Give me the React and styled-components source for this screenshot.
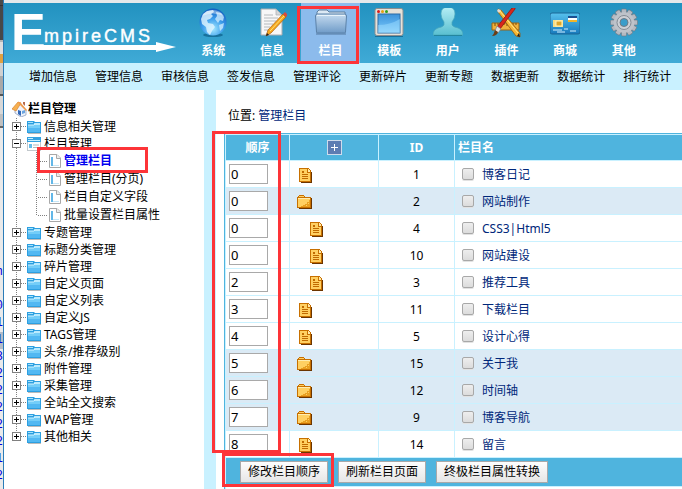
import React, { useState } from 'react';
import styled, { createGlobalStyle, css } from 'styled-components';

const GlobalStyle = createGlobalStyle`
  * {
    box-sizing: border-box;
  }
  body {
    margin: 0;
    background: #fff;
    color: #000;
    font-family: 'Noto Sans', 'Noto Sans CJK SC', sans-serif;
    font-size: 12px;
    line-height: 16px;
  }
  button, input {
    font: inherit;
    color: inherit;
  }
  ul {
    list-style: none;
    margin: 0;
    padding: 0;
  }
  a {
    color: inherit;
    text-decoration: none;
  }
  svg {
    display: block;
    flex: none;
  }
`;

const Page = styled.div`
  display: flex;
  height: 100vh;
  overflow: hidden;
`;

// sliver of the editor window lying behind the browser
const Behind = styled.div`
  flex: none;
  width: 4px;
  overflow: hidden;
  padding-top: 264px;
  border-right: 1px solid #2b7cb8;
  color: #0000e0;
  font-family: 'Liberation Mono', monospace;
  line-height: 17px;
  background: linear-gradient(
    #4a4a4a 0 5px, #333 5px 6px, #484848 6px 40px, #b5b5b5 40px 42px,
    #dedede 42px 54px, #e0a040 54px 63px, #d0d0d0 63px 76px, #a8a8a8 76px 94px,
    #555 94px 96px, #d8d8d8 96px 114px, #c0c0c0 114px 126px, #666 126px 128px,
    #eaeaea 128px
  );
`;

const BehindLine = styled.div`
  display: flex;
  justify-content: flex-end;
  height: 17px;
  background: ${(p) => (p.$current ? '#b4bcc8' : 'transparent')};
`;

const Window = styled.div`
  flex: 1;
  min-width: 0;
  display: flex;
  flex-direction: column;
`;

const Header = styled.header`
  flex: none;
  display: flex;
  align-items: flex-start;
  gap: 8px;
  height: 63px;
  padding-left: 10px;
  border-top: 3px solid #e4e8ea;
  background: linear-gradient(#2292c0, #40aad6);
`;

const LogoBox = styled.div`
  padding-top: 8px;
`;

const TopNav = styled.nav`
  flex: 0 1 469px;
  display: grid;
  grid-template-columns: repeat(8, 1fr);
`;

const TopItem = styled.a`
  position: relative;
  display: flex;
  flex-direction: column;
  align-items: center;
  gap: 5px;
  height: 60px;
  padding-top: 5px;
  color: #fff;
  font-weight: bold;
  background: ${(p) => (p.$active ? '#8cbbec' : 'transparent')};
`;

const Mark = styled.span`
  position: absolute;
  z-index: 2;
  border: 3px solid #fd3438;
  pointer-events: none;
  ${(p) => p.$on === 'nav' && css`
    inset: 3px 1px -1px -4px;
  `}
  ${(p) => p.$on === 'tree' && css`
    inset: -5px auto auto 1px;
    width: 111px;
    height: 26px;
  `}
  ${(p) => p.$on === 'order' && css`
    inset: -2px auto 60px -12px;
    width: 69px;
  `}
  ${(p) => p.$on === 'save' && css`
    inset: auto auto 26px -2px;
    width: 112px;
    height: 34px;
  `}
`;

const SubNav = styled.nav`
  flex: none;
  display: flex;
  align-items: center;
  gap: 18px;
  height: 27px;
  padding-left: 25px;
  overflow: hidden;
  white-space: nowrap;
  background: #c9f1ff;
`;

const Columns = styled.div`
  flex: 1;
  min-height: 0;
  display: flex;
`;

const Sidebar = styled.aside`
  flex: none;
  width: 212px;
  padding: 9px 0 0 8px;
  border-right: 12px solid #c9f1ff;
  white-space: nowrap;
`;

const TreeTitle = styled.div`
  display: flex;
  align-items: center;
  gap: 1px;
  height: 19px;
  font-weight: bold;
`;

const dots = css`
  background-image: repeating-linear-gradient(#808080 0 1px, transparent 1px 2px);
  background-repeat: no-repeat;
`;

const Tree = styled.ul`
  ${dots}
  background-position: 4px 0;
  background-size: 1px calc(100% - 8px);
`;

const Branch = styled.div`
  display: flex;
  align-items: center;
  height: 17px;
`;

const Toggle = styled.button`
  flex: none;
  display: block;
  width: 9px;
  height: 9px;
  padding: 0;
  border: 1px solid #808080;
  background: #fff;
`;

const Dash = styled.span`
  flex: none;
  width: ${(p) => p.$width}px;
  height: 1px;
  margin-right: 1px;
  background: repeating-linear-gradient(90deg, #808080 0 1px, transparent 1px 2px);
`;

const BranchLink = styled.a`
  margin-left: 3px;
`;

const Leaves = styled.ul`
  ${dots}
  margin-left: 24px;
  background-size: 1px calc(100% - 8px);
`;

const Leaf = styled.li`
  position: relative;
  display: flex;
  align-items: center;
  height: 18px;
  padding-left: 2px;
  color: ${(p) => (p.$active ? '#0000f0' : '#000')};
  font-weight: ${(p) => (p.$active ? 'bold' : 'normal')};
`;

const Main = styled.main`
  flex: 1;
  min-width: 0;
  padding: 18px 0 0 8px;
`;

const Crumb = styled.div`
  padding: 0 4px 9px;
`;

const NavyLink = styled.a`
  color: #00277a;
`;

const Sheet = styled.form`
  position: relative;
  margin-right: -3px;
`;

const Table = styled.table`
  width: 100%;
  table-layout: fixed;
  border: 1px solid #4fb4de;
  border-spacing: 1px;
  background: #c9f1ff;
`;

const Col = styled.col`
  width: ${(p) => p.$width};
`;

const Th = styled.th`
  height: 25px;
  padding: 0 3px;
  text-align: ${(p) => p.$align || 'center'};
  color: #fff;
  background: #4fb4de;
`;

const Row = styled.tr`
  background: ${(p) => (p.$parent ? '#dbeaf5' : '#fff')};
`;

const Td = styled.td`
  height: 26px;
  padding: 2px ${(p) => p.$pad || 0}px 0;
  text-align: ${(p) => p.$align || 'left'};
`;

const OrderCell = styled(Td)`
  padding: 0 3px;
`;

const OrderInput = styled.input`
  display: block;
  width: 39px;
  height: 20px;
  padding: 0 1px;
  border: 1px solid #a9a9a9;
  background: #fff;
  font-size: 13px;
`;

const Expand = styled.button`
  display: flex;
  align-items: center;
  justify-content: center;
  width: 15px;
  height: 15px;
  margin: 0 auto;
  padding: 0;
  border: 1px solid #cfdcec;
  background: #5d7db3;
`;

const IconSlot = styled.div`
  display: flex;
  justify-content: flex-end;
  width: 15px;
  margin-left: ${(p) => (p.$child ? 11 : 0)}px;
`;

const NameCell = styled.div`
  display: flex;
  align-items: center;
  gap: 8px;
`;

const Check = styled.input.attrs({ type: 'checkbox' })`
  appearance: none;
  width: 12px;
  height: 12px;
  margin: 0 0 3px;
  border: 1px solid #a8a8a8;
  border-radius: 2px;
  background: linear-gradient(#eee, #dcdcdc);
  box-shadow: 0 1px 0 #e2e2e2;
  &:checked {
    background: #777;
  }
`;

const FootCell = styled.td`
  height: 28px;
  padding: 0 14px;
  background: #4fb4de;
`;

const Actions = styled.div`
  display: flex;
  gap: 10px;
`;

const ActionButton = styled.button`
  height: 22px;
  padding: 0 7px;
  border: 1px solid #a9a9a9;
  background: linear-gradient(#fdfdfd, #e6e6e6);
  line-height: 20px;
  white-space: nowrap;
`;

const LastCell = styled.td`
  height: 24px;
  background: #fff;
`;

const Logo = () => (
  <svg width="162" height="44" viewBox="0 0 162 44" fill="#fff" fontFamily="Liberation Sans, sans-serif">
    <text x="-3" y="39" fontSize="52" fontWeight="bold">E</text>
    <text x="30" y="31" fontSize="18" letterSpacing="3" stroke="#fff" strokeWidth=".4">mpireCMS</text>
    <path d="M4 34h138v-3l20 5-20 5v-2H4z" />
  </svg>
);

const Globe = () => (
  <svg width="30" height="30" viewBox="0 0 30 30">
    <defs>
      <radialGradient id="sea" cx=".5" cy=".75" r=".75">
        <stop offset="0" stopColor="#a4e8ff" />
        <stop offset=".5" stopColor="#3f9fec" />
        <stop offset="1" stopColor="#0f5cc0" />
      </radialGradient>
    </defs>
    <ellipse cx="15" cy="27" rx="10" ry="2" fill="#17719c" />
    <circle cx="15" cy="14" r="13.5" fill="url(#sea)" />
    <path d="M5 6l4-3 6-1 1 2-3 2 2 2-3 3-3 1 1 3 5 1 2 3-3 4-2 4-3-3-1-5-4-3-1-5z" fill="#e2f5ff" opacity=".8" />
    <path d="M18 4l5 1 3 4-1 4-3-1-2 3-3-4 2-3zM21 17l5-2-1 5-3 3z" fill="#d4efff" opacity=".75" />
    <path d="M4 8a13 13 0 0 1 22 0q-11-5-22 0z" fill="#fff" opacity=".4" />
  </svg>
);

const Pencil = () => (
  <svg width="30" height="30" viewBox="0 0 30 30">
    <path d="M4 1h15l6 6v20H4z" fill="#f7f7f7" stroke="#a9adb0" />
    <path d="M19 1v6h6z" fill="#d5d8da" stroke="#a9adb0" strokeWidth=".7" />
    <path d="M7 7h9M7 10h14M7 13h12M7 16h9M7 19h6M7 22h4" stroke="#b5babd" />
    <path d="M26 6l3 3-15 16-5 3 2-6z" fill="#f5a81e" stroke="#a95a0c" strokeWidth=".7" />
    <path d="M27 8L13 23" stroke="#ffe07a" />
    <path d="M26 6l2-2 3 3-2 2z" fill="#d94a3c" />
    <path d="M9 28l1-3 2 2z" fill="#222" />
  </svg>
);

const BigFolder = () => (
  <svg width="32" height="30" viewBox="0 0 32 30">
    <defs>
      <linearGradient id="folder" x2="0" y2="1">
        <stop offset="0" stopColor="#c6dcf0" />
        <stop offset="1" stopColor="#6f9bc8" />
      </linearGradient>
    </defs>
    <path d="M1 25h30v2H1z" fill="#5b82ad" opacity=".6" />
    <path d="M2 4l2-2h8l2 2h16v8H2z" fill="#dce9f4" stroke="#5d7f9f" />
    <path d="M.5 8q0-2 2-2h27q2 0 2 2l-1 16q0 1-1 1h-27q-1 0-1-1z" fill="url(#folder)" stroke="#5b81a8" />
    <path d="M2 7.500h28" stroke="#e8f3fb" />
  </svg>
);

const Template = () => (
  <svg width="30" height="30" viewBox="0 0 30 30">
    <defs>
      <linearGradient id="pane" x2="0" y2="1">
        <stop offset="0" stopColor="#3c92da" />
        <stop offset=".5" stopColor="#5db0ec" />
        <stop offset="1" stopColor="#8fd4fa" />
      </linearGradient>
    </defs>
    <rect x="1" y=".5" width="28" height="27" rx="2" fill="#e6e1d8" stroke="#8c8f90" />
    <rect x="4" y="6" width="22" height="19" fill="url(#pane)" stroke="#2c6da5" />
    <path d="M4 17q12 0 22-6v14H4z" fill="#9bdcff" opacity=".5" />
    <circle cx="4.500" cy="3.500" r="1.500" fill="#d91a1a" />
    <circle cx="8.500" cy="3.500" r="1.500" fill="#e6a010" />
    <circle cx="12.500" cy="3.500" r="1.500" fill="#32a020" />
    <path d="M1 28.500h28" stroke="#176f9a" />
  </svg>
);

const User = () => (
  <svg width="30" height="30" viewBox="0 0 30 30">
    <defs>
      <linearGradient id="user" x2="0" y2="1">
        <stop offset="0" stopColor="#b5eef5" />
        <stop offset="1" stopColor="#59bfd0" />
      </linearGradient>
    </defs>
    <path d="M15-1q7 0 7 7 0 4-3 8v3q1 2 6 3 5 2 5 7H0q0-5 5-7 5-1 6-3v-3Q8 10 8 6q0-7 7-7z" fill="url(#user)" stroke="#4aa9bb" strokeWidth=".7" />
    <path d="M1 27.500h28" stroke="#23869f" />
  </svg>
);

const Tools = () => (
  <svg width="32" height="30" viewBox="0 0 32 30">
    <path d="M2 15h27v7H2z" fill="#efb23c" stroke="#9b6414" />
    <path d="M5 15v3M8 15v2M11 15v3M14 15v2M17 15v3M20 15v2M23 15v3M26 15v2" stroke="#7c4c08" />
    <path d="M8 1l3 1 19 23v4l-4-1L8 4z" fill="#f7b733" stroke="#945a10" strokeWidth=".8" />
    <path d="M10 3l18 22" stroke="#ffe58a" />
    <path d="M8 1l3 1-2 3-2-2z" fill="#ddd" />
    <path d="M27 28l3 1-1-4z" fill="#222" />
    <path d="M22 0l3-1v2L10 21l-3-2z" fill="#d9261c" stroke="#8b1a12" strokeWidth=".8" />
    <path d="M7 18l4 3-3 4-3-2z" fill="#dfe4e6" stroke="#777" strokeWidth=".6" />
    <path d="M5 22l3 2q-1 4-6 4 2-2 3-6z" fill="#6b3e16" />
  </svg>
);

const Card = () => (
  <svg width="30" height="30" viewBox="0 0 30 30">
    <defs>
      <linearGradient id="card" x2="0" y2="1">
        <stop offset="0" stopColor="#58c2ee" />
        <stop offset="1" stopColor="#1779bd" />
      </linearGradient>
    </defs>
    <rect x="0" y="5" width="30" height="21" rx="2" fill="url(#card)" stroke="#1b6797" />
    <rect x="3" y="12" width="10" height="7" fill="#f9dc83" />
    <rect x="6" y="13" width="6" height="5" fill="#dea52b" stroke="#fff3bd" />
    <path d="M18 9h9v3h-9z" fill="#fff" />
    <path d="M18 12h9v2h-9z" fill="#f3b52a" />
    <path d="M18 8h9v2h-9z" fill="#1b4f91" />
    <path d="M3 22h9M14 21h4M20 23h6M7 24h8" stroke="#d3efff" />
  </svg>
);

const Gear = () => (
  <svg width="30" height="30" viewBox="0 0 30 30">
    <g fill="#b5bac2" stroke="#6f7780" strokeWidth=".6">
      {[0, 30, 60, 90, 120, 150].map((a) => (
        <rect key={a} x="12.500" y="1" width="5" height="27" rx="1" transform={`rotate(${a} 15 14.500)`} />
      ))}
    </g>
    <circle cx="15" cy="14.500" r="10.500" fill="#bec3ca" />
    <circle cx="15" cy="14.500" r="7" fill="#cdd1d6" stroke="#858c95" />
    <circle cx="15" cy="14.500" r="4" fill="#3a9dca" stroke="#737a83" />
  </svg>
);

const Home = () => (
  <svg width="15" height="16" viewBox="0 0 15 16">
    <path d="M3 7l5-4 6 6v5l-5 2-6-4z" fill="#eef3fb" stroke="#8496b8" strokeWidth=".7" />
    <path d="M0 8l6-7 3 1-5 8z" fill="#f7b050" stroke="#d98430" strokeWidth=".7" />
    <path d="M6 1h2l7 8-1 1-7-7z" fill="#ef9a4a" />
    <path d="M11 1h2v4l-2-2z" fill="#b86a4a" />
    <path d="M6 9l3 1v5l-3-2z" fill="#3569b7" />
    <path d="M10 10l3-1v3l-3 1z" fill="#6ba4df" />
  </svg>
);

const Folder = () => (
  <svg width="14" height="14" viewBox="0 0 14 14">
    <path d="M0 1h7l1 1h6v11H0z" fill="#2d9fe0" />
    <path d="M1 2h5v1H1zM7 3h6v2H7z" fill="#a5e2fc" />
    <path d="M1 5h12v3H1z" fill="#73cdf8" />
    <path d="M1 8h12v4H1z" fill="#52b8f2" />
    <path d="M1 5h6l1-1h5" stroke="#d2f3ff" fill="none" />
    <path d="M1 13.500h13" stroke="#bbb" />
  </svg>
);

const OpenFolder = () => (
  <svg width="14" height="14" viewBox="0 0 14 14">
    <path d="M0 0h14v14H0z" fill="#c2c8cc" />
    <path d="M0 0h14v5H0z" fill="#35a1df" />
    <path d="M1 1h5v1H1zM1 3h12v1H1z" fill="#c7effe" />
    <path d="M1 5h12v8H1z" fill="#fff" />
    <path d="M2 7h3v4H2z" fill="#66bdeb" />
    <path d="M6 8h6M6 10.500h6" stroke="#b3b9bd" />
  </svg>
);

const PageIcon = () => (
  <svg width="12" height="14" viewBox="0 0 12 14">
    <path d="M.5.5H8L11.500 4v9.500H.5z" fill="#fff" stroke="#a8a8a8" />
    <path d="M7.500.5v4h4" fill="#eee" stroke="#a8a8a8" />
    <path d="M2 3h2v9H2z" fill="#62b7e8" />
    <path d="M4 11h6v1H4z" fill="#c5e6f7" />
  </svg>
);

const DocIcon = () => (
  <svg width="13" height="15" viewBox="0 0 13 15" shapeRendering="crispEdges">
    <path d="M2 2h8l3 3v10H2z" fill="#6b3500" />
    <path d="M0 0h9l3 3v11H0z" fill="#c87000" />
    <path d="M1 1h7v4h3v8H1z" fill="#ffd062" />
    <path d="M9 1v3h2V3z" fill="#ffe9a8" />
    <path d="M3 3h2v2H3zM3 6h6v1H3zM3 8h6v1H3zM3 10h6v1H3z" fill="#c06a00" />
  </svg>
);

const CatFolder = () => (
  <svg width="15" height="14" viewBox="0 0 15 14" shapeRendering="crispEdges">
    <path d="M1 3h14v11H2z" fill="#6b3500" />
    <path d="M1 1h1V0h5v1h1v1h6v11H0V2h1z" fill="#c87000" />
    <path d="M2 1h5v1H2zM1 3h12v9H1z" fill="#ffd062" />
    <path d="M1 3h12v1H1z" fill="#ffedb0" />
    <path d="M12 5h1v7H4v-1h2v-1h2V9h2V7h2z" fill="#e9a022" />
    <path d="M10 6h1v1h-1zM8 8h1v1H8zM6 9h1v1H6zM11 8h1v1h-1zM9 10h1v1H9z" fill="#ffd062" />
  </svg>
);

const topItems = [
  ['系统', Globe],
  ['信息', Pencil],
  ['栏目', BigFolder],
  ['模板', Template],
  ['用户', User],
  ['插件', Tools],
  ['商城', Card],
  ['其他', Gear],
];

const subItems = ['增加信息', '管理信息', '审核信息', '签发信息', '管理评论', '更新碎片', '更新专题', '数据更新', '数据统计', '排行统计'];

const treeItems = [
  { name: '信息相关管理' },
  { name: '栏目管理', leaves: ['管理栏目', '管理栏目(分页)', '栏目自定义字段', '批量设置栏目属性'] },
  { name: '专题管理' },
  { name: '标题分类管理' },
  { name: '碎片管理' },
  { name: '自定义页面' },
  { name: '自定义列表' },
  { name: '自定义JS' },
  { name: 'TAGS管理' },
  { name: '头条/推荐级别' },
  { name: '附件管理' },
  { name: '采集管理' },
  { name: '全站全文搜索' },
  { name: 'WAP管理' },
  { name: '其他相关' },
];

const classes = [
  { order: 0, id: 1, name: '博客日记' },
  { order: 0, id: 2, name: '网站制作', parent: true },
  { order: 0, id: 4, name: 'CSS3|Html5', child: true },
  { order: 0, id: 10, name: '网站建设', child: true },
  { order: 2, id: 3, name: '推荐工具', child: true },
  { order: 3, id: 11, name: '下载栏目' },
  { order: 4, id: 5, name: '设计心得' },
  { order: 5, id: 15, name: '关于我', parent: true },
  { order: 6, id: 12, name: '时间轴', parent: true },
  { order: 7, id: 9, name: '博客导航', parent: true },
  { order: 8, id: 14, name: '留言' },
];

const behindLines = ['n', '', '0', '1', '1', '3', '2', '2', '2', '2', '2', '1', '2'];

function TreeNode({ item }) {
  const [open, setOpen] = useState(Boolean(item.leaves));
  return (
    <li>
      <Branch>
        <Toggle type="button" aria-label={item.name} aria-expanded={open} onClick={() => setOpen(!open)}>
          <svg width="7" height="7" viewBox="0 0 7 7" shapeRendering="crispEdges">
            <path d={open ? 'M1 3h5v1H1z' : 'M1 3h5v1H1zM3 1h1v5H3z'} />
          </svg>
        </Toggle>
        <Dash $width={5} />
        {item.leaves ? <OpenFolder /> : <Folder />}
        <BranchLink href="#">{item.name}</BranchLink>
      </Branch>
      {open && item.leaves && (
        <Leaves>
          {item.leaves.map((leaf, i) => (
            <Leaf key={leaf} $active={i === 0}>
              <Dash $width={10} />
              <PageIcon />
              <BranchLink href="#">{leaf}</BranchLink>
              {i === 0 && <Mark $on="tree" />}
            </Leaf>
          ))}
        </Leaves>
      )}
    </li>
  );
}

function ClassRow({ item }) {
  const [order, setOrder] = useState(String(item.order));
  return (
    <Row $parent={item.parent}>
      <OrderCell>
        <OrderInput aria-label={`${item.name} 顺序`} value={order} onChange={(e) => setOrder(e.target.value)} />
      </OrderCell>
      <Td $pad={7}>
        <IconSlot $child={item.child}>{item.parent ? <CatFolder /> : <DocIcon />}</IconSlot>
      </Td>
      <Td $align="center">{item.id}</Td>
      <Td $pad={7}>
        <NameCell>
          <Check aria-label={item.name} />
          <NavyLink href="#">{item.name}</NavyLink>
        </NameCell>
      </Td>
    </Row>
  );
}

function App() {
  return (
    <Page>
      <GlobalStyle />
      <Behind aria-hidden="true">
        {behindLines.map((line, i) => (
          <BehindLine key={i} $current={i === 4}>{line}</BehindLine>
        ))}
      </Behind>
      <Window>
        <Header>
          <LogoBox>
            <Logo />
          </LogoBox>
          <TopNav>
            {topItems.map(([name, Icon]) => (
              <TopItem key={name} href="#" $active={name === '栏目'}>
                <Icon />
                {name}
                {name === '栏目' && <Mark $on="nav" />}
              </TopItem>
            ))}
          </TopNav>
        </Header>
        <SubNav>
          {subItems.map((name) => (
            <a key={name} href="#">{name}</a>
          ))}
        </SubNav>
        <Columns>
          <Sidebar>
            <TreeTitle>
              <Home />
              栏目管理
            </TreeTitle>
            <Tree>
              {treeItems.map((item) => (
                <TreeNode key={item.name} item={item} />
              ))}
            </Tree>
          </Sidebar>
          <Main>
            <Crumb>
              位置: <NavyLink href="#">管理栏目</NavyLink>
            </Crumb>
            <Sheet onSubmit={(e) => e.preventDefault()}>
              <Table>
                <colgroup>
                  <Col $width="63px" />
                  <Col $width="88px" />
                  <Col $width="75px" />
                  <Col $width="auto" />
                </colgroup>
                <thead>
                  <tr>
                    <Th>顺序</Th>
                    <Th>
                      <Expand type="button" aria-label="展开">
                        <svg width="9" height="9" viewBox="0 0 9 9" shapeRendering="crispEdges">
                          <path d="M1 4h7v1H1zM4 1h1v7H4z" fill="#fff" />
                        </svg>
                      </Expand>
                    </Th>
                    <Th>ID</Th>
                    <Th $align="left">栏目名</Th>
                  </tr>
                </thead>
                <tbody>
                  {classes.map((item) => (
                    <ClassRow key={item.id} item={item} />
                  ))}
                </tbody>
                <tfoot>
                  <tr>
                    <FootCell colSpan={4}>
                      <Actions>
                        <ActionButton>修改栏目顺序</ActionButton>
                        <ActionButton type="button">刷新栏目页面</ActionButton>
                        <ActionButton type="button">终极栏目属性转换</ActionButton>
                      </Actions>
                    </FootCell>
                  </tr>
                  <tr>
                    <LastCell colSpan={4} />
                  </tr>
                </tfoot>
              </Table>
              <Mark $on="order" />
              <Mark $on="save" />
            </Sheet>
          </Main>
        </Columns>
      </Window>
    </Page>
  );
}

export default App;
